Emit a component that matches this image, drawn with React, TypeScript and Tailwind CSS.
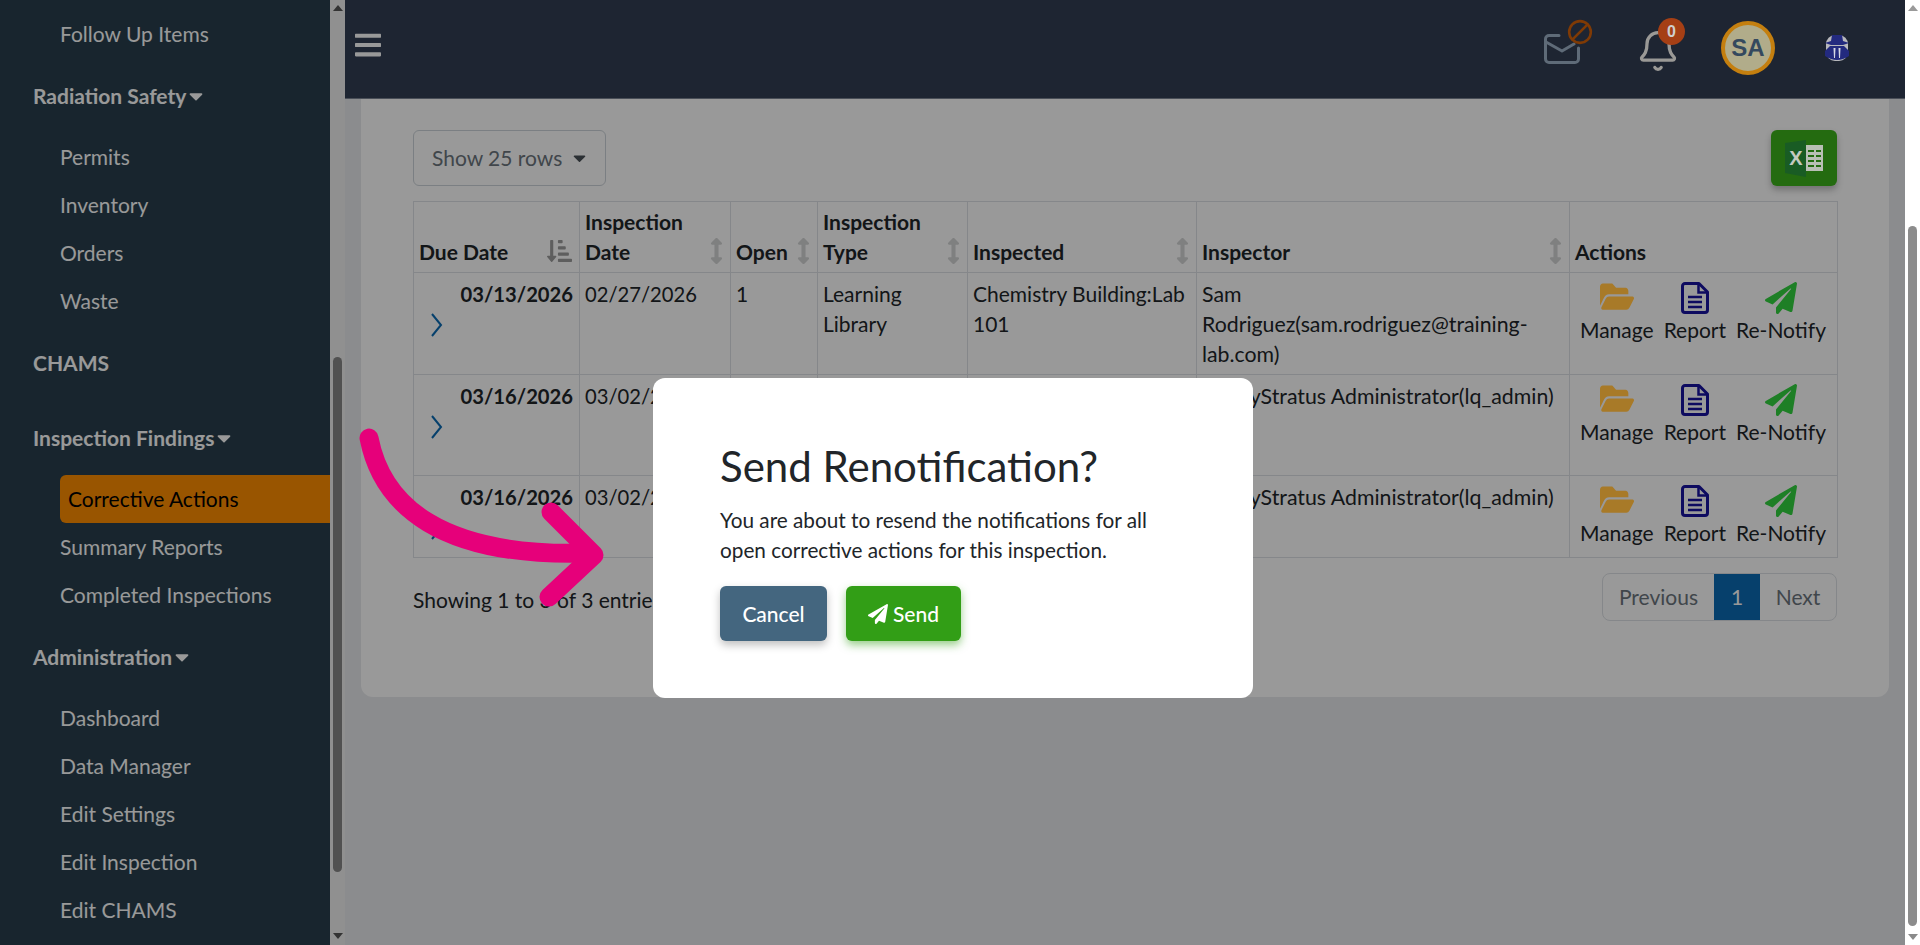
import { FaBars, FaFolderOpen, FaPaperPlane, FaSortAmountDownAlt, FaArrowsAltV, FaCaretDown } from "react-icons/fa";
import { Ban, Bell } from "lucide-react";

function Item({ label, className = "" }: { label: string; className?: string }) {
  return <div className={`flex h-12 items-center pb-[2px] pl-[60px] text-[21px] text-white ${className}`}>{label}</div>;
}

function Group({ label, className = "" }: { label: string; className?: string }) {
  return (
    <div className={`flex h-12 items-center gap-[3px] pb-[2px] pl-[33px] text-[21px] font-bold text-white ${className}`}>
      {label}
      <FaCaretDown className="h-[22px] w-[14px]" />
    </div>
  );
}

function Sidebar() {
  return (
    <aside className="flex h-full w-[345px] shrink-0">
      <nav className="h-full w-[330px] overflow-hidden bg-[#283f4e] pt-[11px]">
        <Item label="Follow Up Items" />
        <Group label="Radiation Safety" className="mt-[14px]" />
        <Item label="Permits" className="mt-[13px]" />
        <Item label="Inventory" />
        <Item label="Orders" />
        <Item label="Waste" />
        <div className="mt-[13px] flex h-12 items-center pl-[33px] text-[21px] font-bold text-white">CHAMS</div>
        <Group label="Inspection Findings" className="mt-[28px]" />
        <div className="mt-[12px] ml-[60px] flex h-12 items-center rounded-l-md bg-[#ff8e00] pl-[8px] text-[21px] text-black">
          Corrective Actions
        </div>
        <Item label="Summary Reports" className="mt-[1px]" />
        <Item label="Completed Inspections" />
        <Group label="Administration" className="mt-[14px]" />
        <Item label="Dashboard" className="mt-[13px]" />
        <Item label="Data Manager" />
        <Item label="Edit Settings" />
        <Item label="Edit Inspection" />
        <Item label="Edit CHAMS" />
      </nav>
      <div className="flex h-full w-[15px] flex-col items-center bg-[#f1f1f1]">
        <div className="mt-[5px] h-0 w-0 border-x-[5px] border-b-[6px] border-x-transparent border-b-[#555555]" />
        <div className="mt-[346px] h-[515px] w-[9px] rounded-full bg-[#888888]" />
        <div className="mt-[61px] h-0 w-0 border-x-[5px] border-t-[6px] border-x-transparent border-t-[#555555]" />
      </div>
    </aside>
  );
}

function SortIcon({ active = false }: { active?: boolean }) {
  return active ? (
    <FaSortAmountDownAlt className="absolute bottom-[8px] right-[7px] h-[26px] w-[25px] text-[#9d9d9d]" />
  ) : (
    <FaArrowsAltV className="absolute bottom-[8px] right-[7px] h-[26px] w-[13px] text-[#d4d5d6]" />
  );
}

function Th({ children, className = "", active, sort = true }: { children: React.ReactNode; className?: string; active?: boolean; sort?: boolean }) {
  return (
    <th className={`relative border border-[#dee2e6] px-[5px] pb-[5px] pt-[3px] align-bottom text-left text-[21px] font-bold leading-[30px] text-[#212529] ${className}`}>
      {children}
      {sort && <SortIcon active={active} />}
    </th>
  );
}

function Td({ children, className = "" }: { children?: React.ReactNode; className?: string }) {
  return <td className={`border border-[#dee2e6] px-[5px] pt-[6px] align-top text-[21px] leading-[30px] text-[#212529] ${className}`}>{children}</td>;
}

function Action({ icon, label }: { icon: React.ReactNode; label: string }) {
  return (
    <div className="flex flex-col items-center">
      <div className="relative z-20 flex h-[32px] items-center justify-center">{icon}</div>
      <span className="mt-[1px] text-[21px] leading-[30px] text-[#212529]">{label}</span>
    </div>
  );
}

function FileIcon() {
  return (
    <svg width="28" height="32" viewBox="0 0 28 32" fill="none" stroke="#0e0b60">
      <path d="M4 1.5 H18 L26.5 10 V28 a2.5 2.5 0 0 1 -2.5 2.5 H4 a2.5 2.5 0 0 1 -2.5 -2.5 V4 a2.5 2.5 0 0 1 2.5 -2.5 Z" strokeWidth="3" strokeLinejoin="round" />
      <path d="M17.5 2 V10.5 H26" strokeWidth="2.5" />
      <path d="M7 15 H21 M7 20 H21 M7 25 H21" strokeWidth="2.4" />
    </svg>
  );
}

function RowChevron() {
  return (
    <svg className="absolute left-[16px] top-[40px]" width="13" height="24" viewBox="0 0 13 24" fill="none" stroke="#0b6cb5" strokeWidth="2">
      <path d="M2 1 L11 12 L2 23" />
    </svg>
  );
}

const rows = [
  { due: "03/13/2026", date: "02/27/2026", inspector: "Sam Rodriguez(sam.rodriguez@training-lab.com)", h: "h-[102px]" },
  { due: "03/16/2026", date: "03/02/2026", inspector: "SafetyStratus Administrator(lq_admin)", h: "h-[101px]" },
  { due: "03/16/2026", date: "03/02/2026", inspector: "SafetyStratus Administrator(lq_admin)", h: "h-[82px]" },
];

function DataTable() {
  return (
    <table className="w-[1424px] table-fixed border-collapse">
      <thead>
        <tr className="h-[71px]">
          <Th className="w-[166px]" active>Due Date</Th>
          <Th className="w-[151px]">Inspection Date</Th>
          <Th className="w-[87px]">Open</Th>
          <Th className="w-[150px]">Inspection Type</Th>
          <Th className="w-[229px]">Inspected</Th>
          <Th className="w-[373px]">Inspector</Th>
          <Th className="w-[268px]" sort={false}>Actions</Th>
        </tr>
      </thead>
      <tbody>
        {rows.map((r, i) => (
          <tr key={i} className={r.h}>
            <Td className="relative !pr-[6px] text-right !text-[20.2px] font-bold">
              <RowChevron />
              {r.due}
            </Td>
            <Td className="!text-[20.2px]">{r.date}</Td>
            <Td>1</Td>
            <Td>Learning Library</Td>
            <Td>Chemistry Building:Lab 101</Td>
            <Td className="!text-[21.3px]">{r.inspector}</Td>
            <Td className="!pt-[9px]">
              <div className="flex justify-start gap-[10px] pl-[5px]">
                <Action icon={<FaFolderOpen preserveAspectRatio="none" className="mb-[3px] h-[35px] w-[34px] text-[#a87a28]" />} label="Manage" />
                <Action icon={<FileIcon />} label="Report" />
                <Action icon={<FaPaperPlane className="h-[32px] w-[32px] text-[#1e7f26]" />} label="Re-Notify" />
              </div>
            </Td>
          </tr>
        ))}
      </tbody>
    </table>
  );
}

function ExcelIcon() {
  return (
    <svg width="38" height="37" viewBox="0 0 38 37">
      <rect x="21" y="5" width="17" height="26" fill="#b9bfb5" />
      <g fill="#246b10">
        <rect x="23" y="10" width="6" height="2" /><rect x="31" y="10" width="5" height="2" />
        <rect x="23" y="15" width="6" height="2" /><rect x="31" y="15" width="5" height="2" />
        <rect x="23" y="20" width="6" height="2" /><rect x="31" y="20" width="5" height="2" />
        <rect x="23" y="25" width="6" height="2" /><rect x="31" y="25" width="5" height="2" />
      </g>
      <polygon points="0,3 21,0 21,37 0,33" fill="#195c24" />
      <text x="11" y="25" textAnchor="middle" fontSize="20" fontWeight="700" fontFamily="'Liberation Sans',sans-serif" fill="#c4cac0">X</text>
    </svg>
  );
}

function Content() {
  return (
    <main className="min-h-0 flex-1 bg-[#e8eaed] px-[16px]">
      <section className="h-[598px] rounded-b-xl bg-white px-[52px] pt-[31px]">
        <div className="flex items-start justify-between">
          <div className="flex h-[56px] w-[193px] items-center justify-between rounded-md border border-[#ced4da] pl-[18px] pr-[19px] text-[21px] text-[#6c757d]">
            Show 25 rows
            <FaCaretDown className="h-[20px] w-[13px] text-[#495057]" />
          </div>
          <div className="relative z-20 flex h-[56px] w-[66px] items-center justify-center rounded-md bg-[#246b10] shadow-[0_4px_6px_rgba(0,0,0,0.25)]">
            <ExcelIcon />
          </div>
        </div>
        <div className="mt-[15px]">
          <DataTable />
        </div>
        <div className="mt-[15px] flex items-center justify-between">
          <div className="mt-[6px] text-[21px] text-[#212529]">Showing 1 to 3 of 3 entries</div>
          <div className="flex h-[48px] overflow-hidden rounded-lg border border-[#dee2e6] text-[21px]">
            <div className="flex w-[111px] items-center justify-center text-[#6c757d]">Previous</div>
            <div className="flex w-[46px] items-center justify-center bg-[#0b6cb5] text-white">1</div>
            <div className="flex w-[76px] items-center justify-center text-[#6c757d]">Next</div>
          </div>
        </div>
      </section>
    </main>
  );
}

function Header() {
  return (
    <header className="relative z-20 flex h-[99px] shrink-0 items-center border-b border-[#4a4f58] bg-[#1e2532]">
      <FaBars className="mb-[8px] ml-[10px] h-[30px] w-[26px] text-[#999999]" />
      <div className="relative ml-auto h-[30px] w-[36px]">
        <svg width="36" height="30" viewBox="0 0 36 30" fill="none" stroke="#5f6b78" strokeWidth="3" strokeLinejoin="round" strokeLinecap="round">
          <path d="M15 1.5 H5 a3.5 3.5 0 0 0 -3.5 3.5 V25 a3.5 3.5 0 0 0 3.5 3.5 H31 a3.5 3.5 0 0 0 3.5 -3.5 V14" />
          <path d="M2 8 L18 17 L30 10" />
        </svg>
        <Ban className="absolute left-[23px] top-[-15px] h-[26px] w-[26px] -scale-x-100 text-[#7f3a05]" strokeWidth={2.4} />
      </div>
      <div className="relative ml-[61px] mt-[3px] h-[35px] w-[33px]">
        <Bell className="ml-[-5.5px] mt-[-4px] h-[44px] w-[44px] text-[#9a9996]" strokeWidth={1.8} />
        <div className="absolute left-[17px] top-[-15px] flex h-[27px] w-[27px] items-center justify-center rounded-full bg-[#a53f15] font-['Liberation_Sans',sans-serif] text-[16px] font-bold text-[#cfcfcf]">0</div>
      </div>
      <div className="ml-[47px] mb-[2px] flex h-[54px] w-[54px] items-center justify-center rounded-full border-[4px] border-[#c47f0f] bg-[#b1ac8a] font-['Liberation_Sans',sans-serif] text-[24px] font-bold text-[#34495e]">SA</div>
      <svg className="mb-[3px] ml-[50px] mr-[56px]" width="24" height="26" viewBox="0 0 24 26">
        <rect x="1" y="0" width="22" height="26" rx="9" fill="#b8b8bc" />
        <path d="M7 0 L17 0 L18 6 L24 8 L18 10 L6 10 L0 8 L6 6 Z" fill="#232a7f" />
        <path d="M5 11 L19 11 L24 16 L24 21 Q12 29 0 21 L0 16 Z" fill="#232a7f" />
        <path d="M8.5 13 L10.5 13 L10 23 L9 23 Z M13.5 13 L15.5 13 L15 23 L14 23 Z" fill="#d6d8e4" />
      </svg>
    </header>
  );
}

function Arrow() {
  return (
    <svg className="pointer-events-none absolute inset-0 z-40" width="1920" height="945" viewBox="0 0 1920 945" fill="none" stroke="#e6007a" strokeLinecap="round" strokeLinejoin="round">
      <path d="M369 438 C382 505 440 558 590 553" strokeWidth="19" />
      <path d="M551 512 L594 555 L549 597" strokeWidth="19" />
    </svg>
  );
}

function Modal() {
  return (
    <div className="absolute inset-0 z-30 flex w-[1905px] items-start justify-center pl-[1px] pt-[378px]">
      <div className="h-[320px] w-[600px] rounded-xl bg-white pl-[67px] pt-[62px]">
        <h2 className="text-[42px] leading-[52px] text-[#212529]">Send Renotification?</h2>
        <p className="mt-[13px] w-[450px] text-[20.75px] leading-[30px] text-[#212529]">
          You are about to resend the notifications for all open corrective actions for this inspection.
        </p>
        <div className="mt-[21px] flex gap-[19px]">
          <button className="h-[55px] w-[107px] rounded-md bg-[#44667f] text-[21px] font-medium text-white shadow-[0_4px_8px_rgba(0,0,0,0.25)]">Cancel</button>
          <button className="flex h-[55px] w-[115px] items-center justify-center gap-[5px] rounded-md bg-[#329e16] text-[21px] font-medium text-white shadow-[0_4px_8px_rgba(50,158,22,0.5)]">
            <FaPaperPlane className="h-[20px] w-[20px]" />
            Send
          </button>
        </div>
      </div>
    </div>
  );
}

export default function App() {
  return (
    <div className="relative flex h-screen w-full overflow-hidden bg-white font-['Lato',sans-serif]">
      <div className="relative flex min-w-0 flex-1">
        <Sidebar />
        <div className="flex min-w-0 flex-1 flex-col">
          <Header />
          <Content />
        </div>
        <div className="absolute inset-0 z-10 bg-black/40" />
      </div>
      <div className="flex h-full w-[15px] shrink-0 flex-col items-center bg-white">
        <div className="mt-[5px] h-0 w-0 border-x-[5px] border-b-[6px] border-x-transparent border-b-[#9a9a9a]" />
        <div className="mt-[215px] h-[700px] w-[9px] rounded-full bg-[#8c8c8c]" />
        <div className="mt-[8px] h-0 w-0 border-x-[5px] border-t-[6px] border-x-transparent border-t-[#8a8a8a]" />
      </div>
      <Modal />
      <Arrow />
    </div>
  );
}
